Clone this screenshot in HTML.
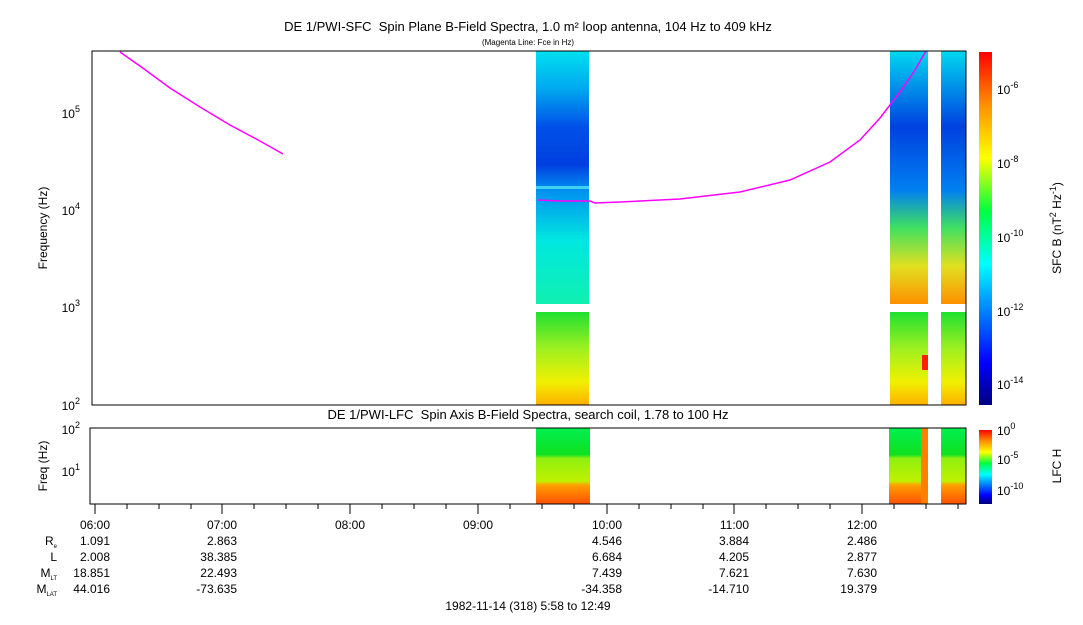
<!DOCTYPE html>
<html><head><style>
body{margin:0;background:#fff;width:1083px;height:620px;overflow:hidden;font-family:"Liberation Sans",sans-serif;}
svg text{font-family:"Liberation Sans",sans-serif;fill:#000}
</style></head><body>
<svg width="1083" height="620" xmlns="http://www.w3.org/2000/svg">
<defs>
<linearGradient id="b1" x1="0" y1="0" x2="0" y2="1">
<stop offset="0" stop-color="#00e0f0"/><stop offset="0.15" stop-color="#00a8f0"/><stop offset="0.3" stop-color="#0050e8"/><stop offset="0.45" stop-color="#0040e0"/><stop offset="0.55" stop-color="#0090f0"/><stop offset="0.75" stop-color="#00e8e0"/><stop offset="1" stop-color="#10f0b0"/></linearGradient>
<linearGradient id="b2" x1="0" y1="0" x2="0" y2="1">
<stop offset="0" stop-color="#20e030"/><stop offset="0.4" stop-color="#a0f020"/><stop offset="0.75" stop-color="#f0f000"/><stop offset="1" stop-color="#ffb000"/></linearGradient>
<linearGradient id="b3" x1="0" y1="0" x2="0" y2="1">
<stop offset="0" stop-color="#00d8f0"/><stop offset="0.3" stop-color="#0040e0"/><stop offset="0.55" stop-color="#0080f0"/><stop offset="0.7" stop-color="#40e060"/><stop offset="0.85" stop-color="#e0e020"/><stop offset="1" stop-color="#ff9000"/></linearGradient>
<linearGradient id="cb" x1="0" y1="1" x2="0" y2="0">
<stop offset="0" stop-color="#000080"/><stop offset="0.12" stop-color="#0000ff"/><stop offset="0.3" stop-color="#00a0ff"/><stop offset="0.4" stop-color="#00ffff"/><stop offset="0.55" stop-color="#00ff40"/><stop offset="0.7" stop-color="#ffff00"/><stop offset="0.85" stop-color="#ff9000"/><stop offset="1" stop-color="#ff0000"/></linearGradient>
<linearGradient id="lf" x1="0" y1="0" x2="0" y2="1">
<stop offset="0" stop-color="#00f050"/><stop offset="0.35" stop-color="#10e020"/><stop offset="0.4" stop-color="#90f010"/><stop offset="0.7" stop-color="#c0f000"/><stop offset="0.75" stop-color="#ffa000"/><stop offset="1" stop-color="#ff5000"/></linearGradient>
</defs>
<text x="528" y="31" font-size="13" text-anchor="middle">DE 1/PWI-SFC&#160; Spin Plane B-Field Spectra, 1.0 m² loop antenna, 104 Hz to 409 kHz</text>
<text x="528" y="45" font-size="8" text-anchor="middle">(Magenta Line: Fce in Hz)</text>
<rect x="536" y="51" width="53" height="253" fill="url(#b1)"/>
<rect x="536" y="186" width="53" height="3" fill="#40d0f0"/>
<rect x="536" y="312" width="53" height="93" fill="url(#b2)"/>
<rect x="890" y="51" width="38" height="253" fill="url(#b3)"/>
<rect x="890" y="312" width="38" height="93" fill="url(#b2)"/>
<rect x="941" y="51" width="25" height="253" fill="url(#b3)"/>
<rect x="941" y="312" width="25" height="93" fill="url(#b2)"/>
<rect x="922" y="355" width="6" height="15" fill="#ff2000"/>
<polyline fill="none" stroke="#ff00ff" stroke-width="1.5" points="120,52 140,66 170,88 200,107 230,125 260,141 283,154"/>
<polyline fill="none" stroke="#ff00ff" stroke-width="1.5" points="538,200 560,201 590,201 595,203 620,202 680,199 740,192 790,180 830,162 860,140 880,118 900,92 915,70 926,51"/>
<rect x="92" y="51" width="874" height="354" fill="none" stroke="#000"/>
<g font-size="12" text-anchor="end">
<text x="80" y="118">10<tspan font-size="9" dy="-6">5</tspan></text>
<text x="80" y="215">10<tspan font-size="9" dy="-6">4</tspan></text>
<text x="80" y="312">10<tspan font-size="9" dy="-6">3</tspan></text>
<text x="80" y="410">10<tspan font-size="9" dy="-6">2</tspan></text>
</g>
<text transform="translate(47,228) rotate(-90)" font-size="12" text-anchor="middle">Frequency (Hz)</text>
<rect x="979" y="52" width="13" height="353" fill="url(#cb)"/>
<g font-size="12">
<text x="997" y="94">10<tspan font-size="9" dy="-6">-6</tspan></text>
<text x="997" y="168">10<tspan font-size="9" dy="-6">-8</tspan></text>
<text x="997" y="242">10<tspan font-size="9" dy="-6">-10</tspan></text>
<text x="997" y="316">10<tspan font-size="9" dy="-6">-12</tspan></text>
<text x="997" y="389">10<tspan font-size="9" dy="-6">-14</tspan></text>
</g>
<text transform="translate(1061,228) rotate(-90)" font-size="12" text-anchor="middle">SFC B (nT<tspan font-size="9" dy="-5">2</tspan><tspan dy="5"> Hz</tspan><tspan font-size="9" dy="-5">-1</tspan><tspan dy="5">)</tspan></text>
<text x="528" y="419" font-size="13" text-anchor="middle">DE 1/PWI-LFC&#160; Spin Axis B-Field Spectra, search coil, 1.78 to 100 Hz</text>
<rect x="536" y="428" width="54" height="76" fill="url(#lf)"/>
<rect x="889" y="428" width="32" height="76" fill="url(#lf)"/>
<rect x="921" y="428" width="7" height="76" fill="#ff8000"/>
<rect x="941" y="428" width="25" height="76" fill="url(#lf)"/>
<rect x="90" y="428" width="876" height="76" fill="none" stroke="#000"/>
<g font-size="12" text-anchor="end">
<text x="80" y="434">10<tspan font-size="9" dy="-6">2</tspan></text>
<text x="80" y="476">10<tspan font-size="9" dy="-6">1</tspan></text>
</g>
<text transform="translate(47,466) rotate(-90)" font-size="12" text-anchor="middle">Freq (Hz)</text>
<rect x="979" y="430" width="13" height="74" fill="url(#cb)"/>
<g font-size="12">
<text x="997" y="435">10<tspan font-size="9" dy="-6">0</tspan></text>
<text x="997" y="464">10<tspan font-size="9" dy="-6">-5</tspan></text>
<text x="997" y="495">10<tspan font-size="9" dy="-6">-10</tspan></text>
</g>
<text transform="translate(1061,466) rotate(-90)" font-size="12" text-anchor="middle">LFC H</text>
<g stroke="#000">
<line x1="95" y1="504" x2="95" y2="514"/><line x1="222" y1="504" x2="222" y2="514"/><line x1="350" y1="504" x2="350" y2="514"/><line x1="478" y1="504" x2="478" y2="514"/><line x1="607" y1="504" x2="607" y2="514"/><line x1="734" y1="504" x2="734" y2="514"/><line x1="862" y1="504" x2="862" y2="514"/>
<line x1="127" y1="504" x2="127" y2="509"/><line x1="159" y1="504" x2="159" y2="509"/><line x1="191" y1="504" x2="191" y2="509"/>
<line x1="254" y1="504" x2="254" y2="509"/><line x1="286" y1="504" x2="286" y2="509"/><line x1="318" y1="504" x2="318" y2="509"/>
<line x1="382" y1="504" x2="382" y2="509"/><line x1="414" y1="504" x2="414" y2="509"/><line x1="446" y1="504" x2="446" y2="509"/>
<line x1="510" y1="504" x2="510" y2="509"/><line x1="542" y1="504" x2="542" y2="509"/><line x1="574" y1="504" x2="574" y2="509"/>
<line x1="639" y1="504" x2="639" y2="509"/><line x1="671" y1="504" x2="671" y2="509"/><line x1="703" y1="504" x2="703" y2="509"/>
<line x1="766" y1="504" x2="766" y2="509"/><line x1="798" y1="504" x2="798" y2="509"/><line x1="830" y1="504" x2="830" y2="509"/>
<line x1="894" y1="504" x2="894" y2="509"/><line x1="926" y1="504" x2="926" y2="509"/><line x1="958" y1="504" x2="958" y2="509"/>
</g>
<g font-size="12" text-anchor="end">
<text x="110" y="529">06:00</text><text x="237" y="529">07:00</text><text x="365" y="529">08:00</text><text x="493" y="529">09:00</text><text x="622" y="529">10:00</text><text x="749" y="529">11:00</text><text x="877" y="529">12:00</text>
<text x="110" y="545">1.091</text><text x="237" y="545">2.863</text><text x="622" y="545">4.546</text><text x="749" y="545">3.884</text><text x="877" y="545">2.486</text>
<text x="110" y="561">2.008</text><text x="237" y="561">38.385</text><text x="622" y="561">6.684</text><text x="749" y="561">4.205</text><text x="877" y="561">2.877</text>
<text x="110" y="577">18.851</text><text x="237" y="577">22.493</text><text x="622" y="577">7.439</text><text x="749" y="577">7.621</text><text x="877" y="577">7.630</text>
<text x="110" y="593">44.016</text><text x="237" y="593">-73.635</text><text x="622" y="593">-34.358</text><text x="749" y="593">-14.710</text><text x="877" y="593">19.379</text>
<text x="57" y="545">R<tspan font-size="6" dy="3">e</tspan></text>
<text x="57" y="561">L</text>
<text x="57" y="577">M<tspan font-size="6" dy="3">LT</tspan></text>
<text x="57" y="593">M<tspan font-size="6" dy="3">LAT</tspan></text>
</g>
<text x="528" y="610" font-size="12" text-anchor="middle">1982-11-14 (318) 5:58 to 12:49</text>
</svg>
</body></html>
